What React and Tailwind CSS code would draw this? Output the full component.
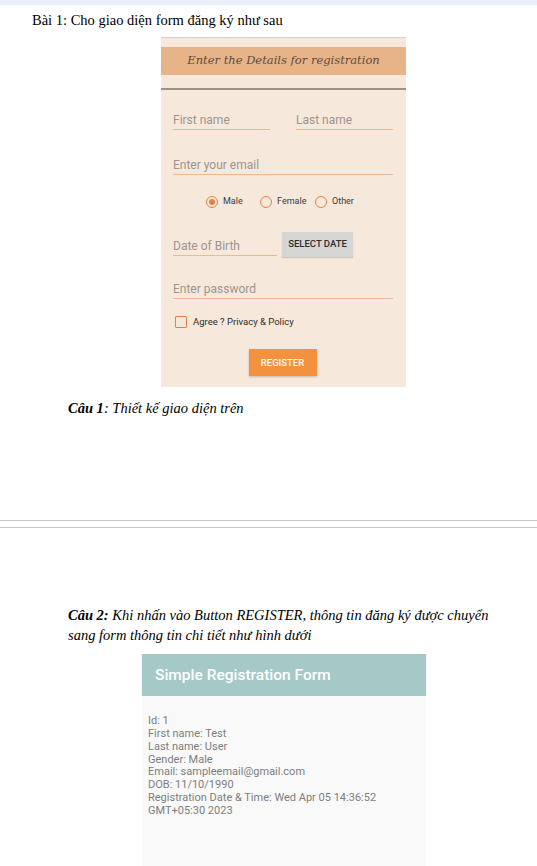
import React from 'react';

const serif = { fontFamily: '"Liberation Serif", "Times New Roman", serif' };
const roboto = { fontFamily: 'Roboto, "Noto Sans", sans-serif' };

function Field({ label, className = '' }) {
  return (
    <div className={`border-b border-[#efb893] pb-[2px] ${className}`}>
      <div className="text-[12px] leading-[14px] text-[#9d958e]">{label}</div>
    </div>
  );
}

function Radio({ label, checked, className = '' }) {
  return (
    <div className={`flex items-center gap-[5px] ${className}`}>
      <span className="w-[12px] h-[12px] rounded-full border-[1.5px] border-[#e3814a] flex items-center justify-center">
        {checked && <span className="w-[6px] h-[6px] rounded-full bg-[#e3814a]" />}
      </span>
      <span className="text-[9px] text-[#3d3a38]">{label}</span>
    </div>
  );
}

function RegisterForm() {
  return (
    <div className="ml-[161px] mt-[8px] w-[245px] bg-[#f7e8dc] border-t border-[#d6d0ca]" style={roboto}>
      <div className="h-[9px]" />
      <div className="h-[28px] bg-[#e7b48a] flex items-center justify-center">
        <span className="italic text-[11.5px] text-[#5f4a3b]" style={{ fontFamily: '"DejaVu Serif", serif' }}>
          Enter the Details for registration
        </span>
      </div>
      <div className="h-[13px]" />
      <div className="h-[2px] bg-[#9b928b]" />
      <div className="pl-[12px] pr-[13px] pt-[23px] pb-[11px]">
        <div className="flex gap-[26px]">
          <Field label="First name" className="w-[97px]" />
          <Field label="Last name" className="w-[97px]" />
        </div>
        <Field label="Enter your email" className="mt-[28px]" />
        <div className="mt-[20px] flex pl-[33px] h-[14px] items-center">
          <Radio label="Male" checked className="w-[54px]" />
          <Radio label="Female" className="w-[55px]" />
          <Radio label="Other" />
        </div>
        <div className="mt-[23px] flex items-end gap-[5px]">
          <Field label="Date of Birth" className="w-[104px] mb-[1px]" />
          <div className="w-[71px] h-[25px] bg-[#d5d5d4] flex items-center justify-center text-[9.5px] font-medium text-[#2d2d2d] shadow-[0_1px_1px_rgba(0,0,0,0.15)]">
            SELECT DATE
          </div>
        </div>
        <Field label="Enter password" className="mt-[25px]" />
        <div className="mt-[16px] flex items-center gap-[6px] pl-[2px]">
          <span className="w-[12px] h-[12px] border-[1.5px] border-[#e3814a] rounded-[1px]" />
          <span className="text-[9.5px] text-[#2d2b29]">Agree ? Privacy &amp; Policy</span>
        </div>
        <div className="mt-[20px] flex justify-center pr-[1px]">
          <div className="w-[68px] h-[27px] bg-[#f4913e] flex items-center justify-center text-[9.5px] font-medium text-white shadow-[0_1px_2px_rgba(0,0,0,0.2)]">
            REGISTER
          </div>
        </div>
      </div>
    </div>
  );
}

function DetailScreen() {
  const lines = [
    'Id: 1',
    'First name: Test',
    'Last name: User',
    'Gender: Male',
    'Email: sampleemail@gmail.com',
    'DOB: 11/10/1990',
    'Registration Date & Time: Wed Apr 05 14:36:52',
    'GMT+05:30 2023',
  ];
  return (
    <div className="ml-[142px] w-[284px] mt-[9px]" style={roboto}>
      <div className="h-[42px] bg-[#a5c9c6] flex items-center pl-[13px] shadow-[0_1px_2px_rgba(0,0,0,0.12)]">
        <span className="text-white text-[15.5px] font-medium">Simple Registration Form</span>
      </div>
      <div className="bg-[#f9f9f9] h-[175px] pl-[6px] pt-[19px] text-[11px] leading-[12.8px] text-[#7d7d7d]">
        {lines.map(l => <div key={l}>{l}</div>)}
      </div>
    </div>
  );
}

export default function App() {
  return (
    <div className="w-[537px] h-[866px] bg-white overflow-hidden text-black">
      <div className="h-[5px] bg-[#e9eef8]" />
      <div className="pl-[32px] pt-[6px] text-[14.5px] leading-[18px]" style={serif}>
        Bài 1: Cho giao diện form đăng ký như sau
      </div>
      <RegisterForm />
      <div className="pl-[68px] mt-[12px] text-[14.5px] italic leading-[18px]" style={serif}>
        <b>Câu 1</b>: Thiết kế giao diện trên
      </div>
      <div className="mt-[103px] h-px bg-[#c9c9c9]" />
      <div className="mt-[6px] h-px bg-[#c9c9c9]" />
      <div className="pl-[68px] pr-[20px] mt-[77px] text-[14.5px] italic leading-[20px]" style={serif}>
        <b>Câu 2:</b> Khi nhấn vào Button REGISTER, thông tin đăng ký được chuyển sang form thông tin chi tiết như hình dưới
      </div>
      <DetailScreen />
    </div>
  );
}
